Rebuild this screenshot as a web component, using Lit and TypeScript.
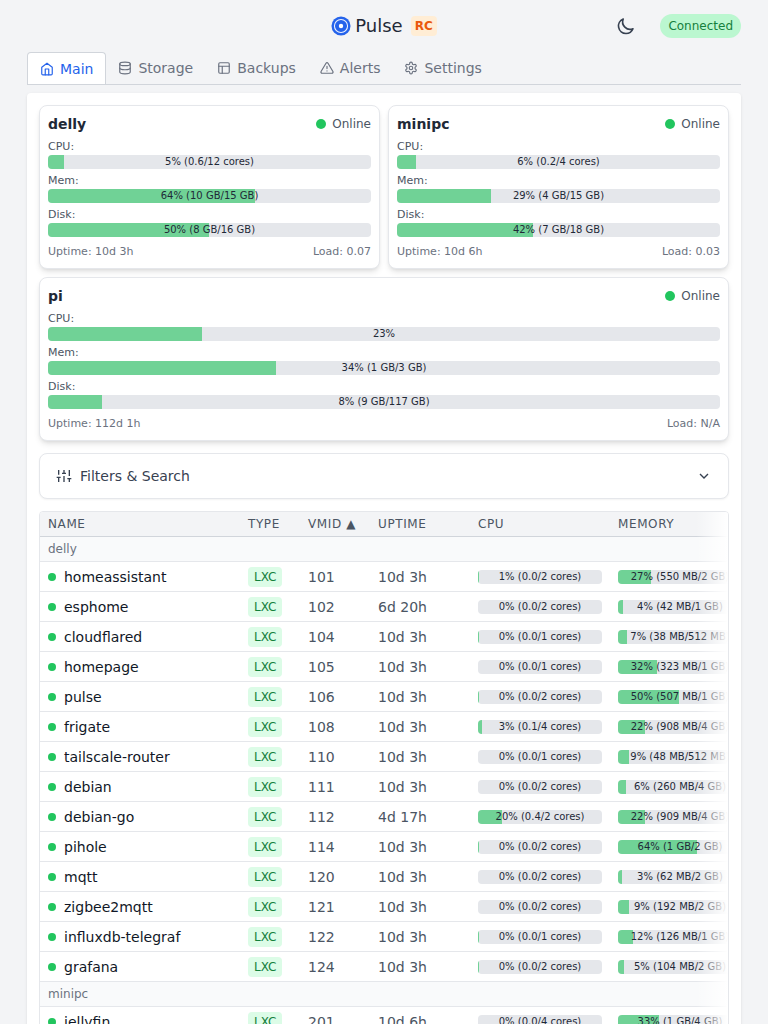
import { LitElement, html, css, svg } from "lit";
import { customElement, property, state } from "lit/decorators.js";
import { classMap } from "lit/directives/class-map.js";
import { styleMap } from "lit/directives/style-map.js";

interface NodeInfo {
  name: string;
  cpu: [number, string];
  mem: [number, string];
  disk: [number, string];
  uptime: string;
  load: string;
  wide?: boolean;
}

interface Guest {
  name: string;
  vmid: number;
  uptime: string;
  cpu: [number, string];
  mem: [number, string];
}

const NODES: NodeInfo[] = [
  { name: "delly", cpu: [5, "5% (0.6/12 cores)"], mem: [64, "64% (10 GB/15 GB)"], disk: [49.8, "50% (8 GB/16 GB)"], uptime: "10d 3h", load: "0.07" },
  { name: "minipc", cpu: [6, "6% (0.2/4 cores)"], mem: [29, "29% (4 GB/15 GB)"], disk: [42, "42% (7 GB/18 GB)"], uptime: "10d 6h", load: "0.03" },
  { name: "pi", cpu: [22.9, "23%"], mem: [34, "34% (1 GB/3 GB)"], disk: [8, "8% (9 GB/117 GB)"], uptime: "112d 1h", load: "N/A", wide: true },
];

const GROUPS: { node: string; guests: Guest[] }[] = [
  {
    node: "delly",
    guests: [
      { name: "homeassistant", vmid: 101, uptime: "10d 3h", cpu: [1, "1% (0.0/2 cores)"], mem: [27, "27% (550 MB/2 GB)"] },
      { name: "esphome", vmid: 102, uptime: "6d 20h", cpu: [0, "0% (0.0/2 cores)"], mem: [4, "4% (42 MB/1 GB)"] },
      { name: "cloudflared", vmid: 104, uptime: "10d 3h", cpu: [0.8, "0% (0.0/1 cores)"], mem: [7, "7% (38 MB/512 MB)"] },
      { name: "homepage", vmid: 105, uptime: "10d 3h", cpu: [0, "0% (0.0/1 cores)"], mem: [31.5, "32% (323 MB/1 GB)"] },
      { name: "pulse", vmid: 106, uptime: "10d 3h", cpu: [0.8, "0% (0.0/2 cores)"], mem: [49.5, "50% (507 MB/1 GB)"] },
      { name: "frigate", vmid: 108, uptime: "10d 3h", cpu: [3, "3% (0.1/4 cores)"], mem: [22, "22% (908 MB/4 GB)"] },
      { name: "tailscale-router", vmid: 110, uptime: "10d 3h", cpu: [0, "0% (0.0/1 cores)"], mem: [9, "9% (48 MB/512 MB)"] },
      { name: "debian", vmid: 111, uptime: "10d 3h", cpu: [0, "0% (0.0/2 cores)"], mem: [6.3, "6% (260 MB/4 GB)"] },
      { name: "debian-go", vmid: 112, uptime: "4d 17h", cpu: [19.5, "20% (0.4/2 cores)"], mem: [22, "22% (909 MB/4 GB)"] },
      { name: "pihole", vmid: 114, uptime: "10d 3h", cpu: [0.8, "0% (0.0/2 cores)"], mem: [64, "64% (1 GB/2 GB)"] },
      { name: "mqtt", vmid: 120, uptime: "10d 3h", cpu: [0, "0% (0.0/2 cores)"], mem: [3, "3% (62 MB/2 GB)"] },
      { name: "zigbee2mqtt", vmid: 121, uptime: "10d 3h", cpu: [0, "0% (0.0/2 cores)"], mem: [9, "9% (192 MB/2 GB)"] },
      { name: "influxdb-telegraf", vmid: 122, uptime: "10d 3h", cpu: [0.8, "0% (0.0/1 cores)"], mem: [12, "12% (126 MB/1 GB)"] },
      { name: "grafana", vmid: 124, uptime: "10d 3h", cpu: [0.8, "0% (0.0/2 cores)"], mem: [5, "5% (104 MB/2 GB)"] },
    ],
  },
  {
    node: "minipc",
    guests: [
      { name: "jellyfin", vmid: 201, uptime: "10d 6h", cpu: [0, "0% (0.0/4 cores)"], mem: [33, "33% (1 GB/4 GB)"] },
    ],
  },
];

const TABS = [
  {
    label: "Main",
    icon: svg`<path d="M3 9l9-7 9 7v11a2 2 0 0 1-2 2H5a2 2 0 0 1-2-2z"/><polyline points="9 22 9 12 15 12 15 22"/>`,
  },
  {
    label: "Storage",
    icon: svg`<ellipse cx="12" cy="5" rx="9" ry="3"/><path d="M21 12c0 1.66-4 3-9 3s-9-1.34-9-3"/><path d="M3 5v14c0 1.66 4 3 9 3s9-1.34 9-3V5"/>`,
  },
  {
    label: "Backups",
    icon: svg`<rect x="3" y="3" width="18" height="18" rx="2"/><path d="M3 9h18M9 21V9"/>`,
  },
  {
    label: "Alerts",
    icon: svg`<path d="M10.29 3.86L1.82 18a2 2 0 0 0 1.71 3h16.94a2 2 0 0 0 1.71-3L13.71 3.86a2 2 0 0 0-3.42 0z"/><path d="M12 9v4M12 17h.01"/>`,
  },
  {
    label: "Settings",
    icon: svg`<path d="M12.22 2h-.44a2 2 0 0 0-2 2v.18a2 2 0 0 1-1 1.73l-.43.25a2 2 0 0 1-2 0l-.15-.08a2 2 0 0 0-2.73.73l-.22.38a2 2 0 0 0 .73 2.73l.15.1a2 2 0 0 1 1 1.72v.51a2 2 0 0 1-1 1.74l-.15.09a2 2 0 0 0-.73 2.73l.22.38a2 2 0 0 0 2.73.73l.15-.08a2 2 0 0 1 2 0l.43.25a2 2 0 0 1 1 1.73V20a2 2 0 0 0 2 2h.44a2 2 0 0 0 2-2v-.18a2 2 0 0 1 1-1.73l.43-.25a2 2 0 0 1 2 0l.15.08a2 2 0 0 0 2.73-.73l.22-.39a2 2 0 0 0-.73-2.73l-.15-.08a2 2 0 0 1-1-1.74v-.5a2 2 0 0 1 1-1.74l.15-.09a2 2 0 0 0 .73-2.73l-.22-.38a2 2 0 0 0-2.73-.73l-.15.08a2 2 0 0 1-2 0l-.43-.25a2 2 0 0 1-1-1.73V4a2 2 0 0 0-2-2z"/><circle cx="12" cy="12" r="3"/>`,
  },
];

@customElement("usage-bar")
export class UsageBar extends LitElement {
  @property({ type: Number }) value = 0;
  @property() text = "";

  static styles = css`
    :host {
      display: block;
    }
    .track {
      position: relative;
      display: flex;
      align-items: center;
      justify-content: center;
      height: 14px;
      border-radius: 4px;
      background: #e5e7eb;
      overflow: hidden;
    }
    .fill {
      position: absolute;
      inset: 0 auto 0 0;
      background: rgba(34, 197, 94, 0.6);
    }
    .text {
      position: relative;
      font-size: 10px;
      line-height: 10px;
      color: #1f2937;
      white-space: nowrap;
    }
  `;

  render() {
    return html`<div class="track">
      <div class="fill" style=${styleMap({ width: `${this.value}%` })}></div>
      <span class="text">${this.text}</span>
    </div>`;
  }
}

@customElement("node-card")
export class NodeCard extends LitElement {
  @property({ attribute: false }) node!: NodeInfo;

  static styles = css`
    :host {
      display: block;
    }
    .card {
      padding: 8px;
      border: 1px solid #e5e7eb;
      border-radius: 8px;
      background: #fff;
      box-shadow: 0 4px 6px -1px rgba(0, 0, 0, 0.1), 0 2px 4px -2px rgba(0, 0, 0, 0.1);
    }
    .head {
      display: flex;
      align-items: center;
      justify-content: space-between;
      margin-bottom: 4px;
    }
    .name {
      margin: 0;
      font-size: 14px;
      line-height: 20px;
      font-weight: 700;
      color: #1f2937;
    }
    .status {
      display: flex;
      align-items: center;
      gap: 6px;
      font-size: 12px;
      line-height: 16px;
      color: #4b5563;
    }
    .dot {
      width: 10px;
      height: 10px;
      border-radius: 50%;
      background: #22c55e;
    }
    .metrics {
      display: grid;
      gap: 3px;
      font-size: 11px;
      line-height: 17px;
      color: #4b5563;
    }
    .foot {
      display: flex;
      justify-content: space-between;
      margin-top: 6px;
      font-size: 11px;
      line-height: 17px;
      color: #6b7280;
    }
  `;

  private metric(label: string, [value, text]: [number, string]) {
    return html`<div>
      <div>${label}:</div>
      <usage-bar .value=${value} .text=${text}></usage-bar>
    </div>`;
  }

  render() {
    const n = this.node;
    return html`<article class="card">
      <div class="head">
        <h3 class="name">${n.name}</h3>
        <span class="status"><span class="dot"></span>Online</span>
      </div>
      <div class="metrics">
        ${this.metric("CPU", n.cpu)} ${this.metric("Mem", n.mem)} ${this.metric("Disk", n.disk)}
      </div>
      <div class="foot"><span>Uptime: ${n.uptime}</span><span>Load: ${n.load}</span></div>
    </article>`;
  }
}

@customElement("app-root")
export class AppRoot extends LitElement {
  @state() private tab = "Main";

  static styles = css`
    :host {
      display: block;
      box-sizing: border-box;
      min-height: 100vh;
      padding: 8px 27px 0;
      background: #f3f4f6;
      color: #1f2937;
      font-family: "DejaVu Sans", sans-serif;
      font-size: 14px;
      line-height: 20px;
    }
    button {
      margin: 0;
      padding: 0;
      border: 0;
      background: none;
      color: inherit;
      font: inherit;
      cursor: pointer;
    }
    svg {
      display: block;
      flex: none;
    }
    .header {
      display: grid;
      grid-template-columns: 1fr auto 1fr;
      align-items: center;
      margin-bottom: 8px;
    }
    .brand {
      grid-column: 2;
      display: flex;
      align-items: center;
      gap: 4px;
    }
    .title {
      margin: 0;
      font-size: 18px;
      line-height: 28px;
      font-weight: 400;
    }
    .rc {
      margin-left: 4px;
      padding: 2px 4px;
      border-radius: 4px;
      background: #ffedd5;
      color: #ea580c;
      font-size: 12px;
      line-height: 16px;
      font-weight: 700;
    }
    .actions {
      display: flex;
      align-items: center;
      justify-content: flex-end;
      gap: 16px;
    }
    .theme {
      padding: 8px;
      color: #374151;
    }
    .pill {
      padding: 4px 8px;
      border-radius: 12px;
      background: #bbf7d0;
      color: #15803d;
      font-size: 12px;
      line-height: 16px;
    }
    .tabs {
      display: flex;
      align-items: flex-start;
      border-bottom: 1px solid #d1d5db;
    }
    .tab {
      display: flex;
      align-items: center;
      gap: 6px;
      padding: 6px 12px;
      color: #6b7280;
    }
    .tab.active {
      padding-bottom: 5px;
      border: 1px solid #d1d5db;
      border-bottom: 0;
      border-radius: 4px 4px 0 0;
      background: #fff;
      color: #2563eb;
    }
    .panel {
      margin-top: 8px;
      padding: 12px;
      border-radius: 4px;
      background: #fff;
      box-shadow: 0 1px 3px rgba(0, 0, 0, 0.1);
    }
    .nodes {
      display: grid;
      grid-template-columns: 1fr 1fr;
      gap: 8px;
    }
    .wide {
      grid-column: 1 / -1;
    }
    .filters {
      display: flex;
      align-items: center;
      box-sizing: border-box;
      width: 100%;
      gap: 8px;
      margin: 12px 0;
      padding: 12px 16px;
      border: 1px solid #e5e7eb;
      border-radius: 8px;
      background: #fff;
      box-shadow: 0 1px 2px rgba(0, 0, 0, 0.05);
      color: #374151;
      text-align: left;
    }
    .grow {
      flex: 1;
    }
    .table-box {
      position: relative;
      border: 1px solid #e5e7eb;
      border-radius: 4px;
      overflow: hidden;
    }
    .table-box::after {
      content: "";
      position: absolute;
      inset: 0 0 0 auto;
      width: 32px;
      background: linear-gradient(to right, rgba(255, 255, 255, 0), #fff);
      pointer-events: none;
    }
    .scroll {
      overflow-x: auto;
    }
    .guests {
      width: 100%;
      min-width: 710px;
      table-layout: fixed;
      border-collapse: separate;
      border-spacing: 0;
    }
    .c-name {
      width: 200px;
    }
    .c-type {
      width: 60px;
    }
    .c-vmid {
      width: 70px;
    }
    .c-uptime {
      width: 100px;
    }
    .c-usage {
      width: 140px;
    }
    th,
    td {
      padding: 4px 8px;
      border-bottom: 1px solid #e5e7eb;
      text-align: left;
      white-space: nowrap;
      vertical-align: middle;
    }
    thead th {
      border-bottom-color: #d1d5db;
      background: #f3f4f6;
      color: #4b5563;
      font-size: 12px;
      line-height: 16px;
      font-weight: 400;
      letter-spacing: 0.05em;
      text-transform: uppercase;
    }
    .group {
      background: #f9fafb;
      color: #6b7280;
      font-size: 12px;
      line-height: 16px;
      font-weight: 400;
    }
    .guest td {
      height: 21px;
      color: #4b5563;
    }
    .guest-name {
      display: flex;
      align-items: center;
      gap: 8px;
      color: #111827;
    }
    .dot {
      width: 8px;
      height: 8px;
      border-radius: 50%;
      background: #22c55e;
    }
    .badge {
      display: block;
      width: fit-content;
      padding: 2px 6px;
      border-radius: 4px;
      background: #dcfce7;
      color: #15803d;
      font-size: 12px;
      line-height: 16px;
    }
  `;

  private guestRow(g: Guest) {
    return html`<tr class="guest">
      <td><span class="guest-name"><span class="dot"></span>${g.name}</span></td>
      <td><span class="badge">LXC</span></td>
      <td>${g.vmid}</td>
      <td>${g.uptime}</td>
      <td><usage-bar .value=${g.cpu[0]} .text=${g.cpu[1]}></usage-bar></td>
      <td><usage-bar .value=${g.mem[0]} .text=${g.mem[1]}></usage-bar></td>
    </tr>`;
  }

  render() {
    return html`
      <header class="header">
        <div class="brand">
          <svg width="20" height="20" viewBox="0 0 256 256" aria-hidden="true">
            <circle cx="128" cy="128" r="122" fill="#2563eb" />
            <circle cx="128" cy="128" r="84" fill="none" stroke="#fff" stroke-width="14" stroke-opacity="0.92" />
            <circle cx="128" cy="128" r="28" fill="#fff" />
          </svg>
          <h1 class="title">Pulse</h1>
          <span class="rc">RC</span>
        </div>
        <div class="actions">
          <button class="theme" aria-label="Toggle dark mode">
            <svg width="20" height="20" viewBox="0 0 24 24" fill="none" stroke="currentColor" stroke-width="2" stroke-linecap="round" stroke-linejoin="round">
              <path d="M20.354 15.354A9 9 0 018.646 3.646 9.003 9.003 0 0012 21a9.003 9.003 0 008.354-5.646z" />
            </svg>
          </button>
          <span class="pill">Connected</span>
        </div>
      </header>
      <nav class="tabs" role="tablist">
        ${TABS.map(
          (t) => html`<button
            class=${classMap({ tab: true, active: t.label === this.tab })}
            role="tab"
            aria-selected=${t.label === this.tab ? "true" : "false"}
            @click=${() => (this.tab = t.label)}
          >
            <svg width="14" height="14" viewBox="0 0 24 24" fill="none" stroke="currentColor" stroke-width="2" stroke-linecap="round" stroke-linejoin="round" aria-hidden="true">${t.icon}</svg>
            <span>${t.label}</span>
          </button>`
        )}
      </nav>
      <main class="panel">
        <section class="nodes">
          ${NODES.map((n) => html`<node-card class=${classMap({ wide: !!n.wide })} .node=${n}></node-card>`)}
        </section>
        <button class="filters" aria-expanded="false">
          <svg width="16" height="16" viewBox="0 0 24 24" fill="none" stroke="currentColor" stroke-width="2" aria-hidden="true">
            <path d="M4 21v-7M4 10V3M12 21v-9M12 8V3M20 21v-5M20 12V3M1 14h6M9 8h6M17 16h6" />
          </svg>
          <span class="grow">Filters &amp; Search</span>
          <svg width="16" height="16" viewBox="0 0 24 24" fill="none" stroke="currentColor" stroke-width="2" aria-hidden="true">
            <path d="M6 9l6 6 6-6" />
          </svg>
        </button>
        <div class="table-box">
          <div class="scroll">
            <table class="guests">
              <colgroup>
                <col class="c-name" />
                <col class="c-type" />
                <col class="c-vmid" />
                <col class="c-uptime" />
                <col class="c-usage" />
                <col class="c-usage" />
              </colgroup>
              <thead>
                <tr>
                  <th scope="col">Name</th>
                  <th scope="col">Type</th>
                  <th scope="col" aria-sort="ascending">VMID ▲</th>
                  <th scope="col">Uptime</th>
                  <th scope="col">CPU</th>
                  <th scope="col">Memory</th>
                </tr>
              </thead>
              ${GROUPS.map(
                (g) => html`<tbody>
                  <tr>
                    <th class="group" scope="rowgroup" colspan="6">${g.node}</th>
                  </tr>
                  ${g.guests.map((guest) => this.guestRow(guest))}
                </tbody>`
              )}
            </table>
          </div>
        </div>
      </main>
    `;
  }
}
